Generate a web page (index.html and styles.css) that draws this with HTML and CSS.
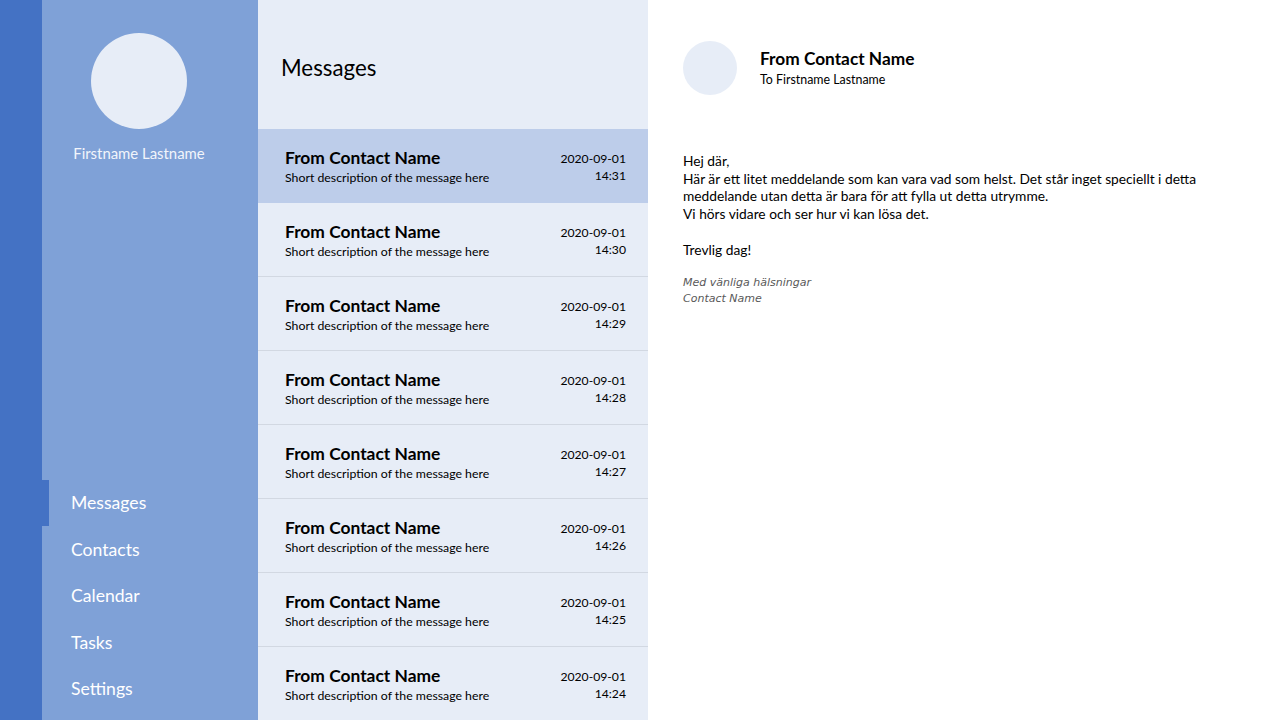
FILE: index.html
```html
<!DOCTYPE html>
<html lang="sv">
<head>
<meta charset="utf-8">
<title>Messages</title>
<link rel="stylesheet" href="styles.css">
</head>
<body>
<div class="app">
  <div class="strip"></div>
  <aside class="sidebar">
    <div class="profile">
      <div class="avatar-lg"></div>
      <div class="profile-name">Firstname Lastname</div>
    </div>
    <nav class="nav">
      <a class="nav-item active">Messages</a>
      <a class="nav-item">Contacts</a>
      <a class="nav-item">Calendar</a>
      <a class="nav-item">Tasks</a>
      <a class="nav-item">Settings</a>
    </nav>
  </aside>
  <section class="list">
    <header class="list-header">Messages</header>
    <div class="items">
      <div class="item selected"><div class="item-main"><div class="item-title">From Contact Name</div><div class="item-desc">Short description of the message here</div></div><div class="item-date">2020-09-01<br>14:31</div></div>
      <div class="item"><div class="item-main"><div class="item-title">From Contact Name</div><div class="item-desc">Short description of the message here</div></div><div class="item-date">2020-09-01<br>14:30</div></div>
      <div class="item"><div class="item-main"><div class="item-title">From Contact Name</div><div class="item-desc">Short description of the message here</div></div><div class="item-date">2020-09-01<br>14:29</div></div>
      <div class="item"><div class="item-main"><div class="item-title">From Contact Name</div><div class="item-desc">Short description of the message here</div></div><div class="item-date">2020-09-01<br>14:28</div></div>
      <div class="item"><div class="item-main"><div class="item-title">From Contact Name</div><div class="item-desc">Short description of the message here</div></div><div class="item-date">2020-09-01<br>14:27</div></div>
      <div class="item"><div class="item-main"><div class="item-title">From Contact Name</div><div class="item-desc">Short description of the message here</div></div><div class="item-date">2020-09-01<br>14:26</div></div>
      <div class="item"><div class="item-main"><div class="item-title">From Contact Name</div><div class="item-desc">Short description of the message here</div></div><div class="item-date">2020-09-01<br>14:25</div></div>
      <div class="item"><div class="item-main"><div class="item-title">From Contact Name</div><div class="item-desc">Short description of the message here</div></div><div class="item-date">2020-09-01<br>14:24</div></div>
    </div>
  </section>
  <main class="detail">
    <div class="detail-header">
      <div class="avatar-sm"></div>
      <div class="detail-meta">
        <div class="detail-from">From Contact Name</div>
        <div class="detail-to">To Firstname Lastname</div>
      </div>
    </div>
    <div class="detail-body">
      <p>Hej där,<br>Här är ett litet meddelande som kan vara vad som helst. Det står inget speciellt i detta<br>meddelande utan detta är bara för att fylla ut detta utrymme.<br>Vi hörs vidare och ser hur vi kan lösa det.</p>
      <p>Trevlig dag!</p>
      <p class="signature">Med vänliga hälsningar<br>Contact Name</p>
    </div>
  </main>
</div>
</body>
</html>
```
FILE: styles.css
```css
* { box-sizing: border-box; }
html, body { margin: 0; padding: 0; }
body {
  font-family: "Lato", "Noto Sans", sans-serif;
  color: #000;
  background: #fff;
}
.app {
  display: flex;
  width: 1280px;
  height: 720px;
  overflow: hidden;
}
.strip {
  width: 42px;
  flex: none;
  background: #4472c4;
}
.sidebar {
  width: 216px;
  flex: none;
  background: #7fa1d7;
  display: flex;
  flex-direction: column;
  justify-content: space-between;
}
.profile {
  display: flex;
  flex-direction: column;
  align-items: center;
  padding: 33px 22px 0 0;
}
.avatar-lg {
  width: 96px;
  height: 96px;
  border-radius: 50%;
  background: #e7edf7;
}
.profile-name {
  margin-top: 15px;
  color: #f2f5fb;
  font-size: 14.9px;
  line-height: 19px;
}
.nav {
  display: flex;
  flex-direction: column;
  padding-bottom: 8px;
}
.nav-item {
  height: 46.5px;
  display: flex;
  align-items: center;
  color: #fff;
  font-size: 17.6px;
  border-left: 7px solid transparent;
  padding-left: 22px;
}
.nav-item.active {
  border-left-color: #4472c4;
}
.list {
  width: 390px;
  flex: none;
  background: #e7edf7;
  display: flex;
  flex-direction: column;
}
.list-header {
  height: 129px;
  flex: none;
  padding: 54px 0 0 23px;
  font-size: 22.3px;
  line-height: 27px;
}
.items {
  display: flex;
  flex-direction: column;
}
.item {
  height: 74px;
  display: flex;
  justify-content: space-between;
  align-items: flex-start;
  padding: 18px 22px 0 27px;
  border-bottom: 1px solid #d2d8e2;
}
.item.selected {
  background: #bdcdea;
  border-bottom-color: #bdcdea;
}
.item-title {
  font-size: 17.4px;
  font-weight: 700;
  line-height: 22px;
}
.item-desc {
  font-size: 12.3px;
  line-height: 16px;
  margin-top: 1px;
}
.item-date {
  text-align: right;
  font-size: 12.2px;
  line-height: 17px;
  padding-top: 3px;
}
.detail {
  flex: 1;
  background: #fff;
  padding: 41px 0 0 35px;
}
.detail-header {
  display: flex;
  align-items: flex-start;
  gap: 23px;
}
.avatar-sm {
  width: 54px;
  height: 54px;
  border-radius: 50%;
  background: #e7edf7;
}
.detail-meta {
  padding-top: 6px;
}
.detail-from {
  font-size: 17.3px;
  font-weight: 700;
  line-height: 24px;
}
.detail-to {
  font-size: 12.4px;
  line-height: 16px;
  margin-top: 1px;
}
.detail-body {
  margin-top: 56px;
  padding-top: 1px;
  font-size: 13.75px;
  line-height: 17.7px;
}
.detail-body p {
  margin: 0 0 17.7px 0;
}
.detail-body .signature {
  font-family: "DejaVu Sans", "Liberation Sans", sans-serif;
  font-style: italic;
  font-size: 11px;
  line-height: 16px;
  color: #595959;
  margin-top: -1px;
}
```
